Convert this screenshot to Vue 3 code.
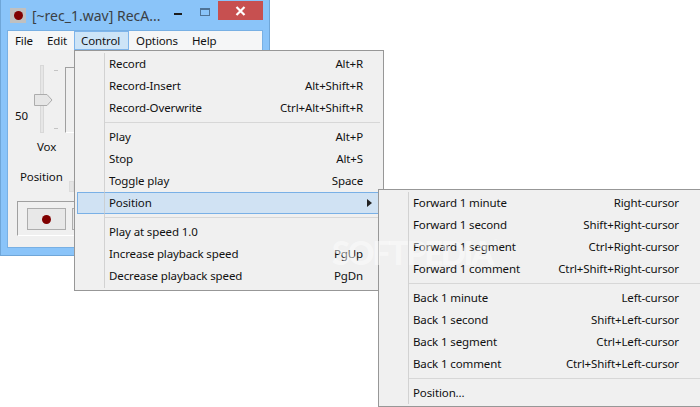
<script setup>
const menuBar = ['File', 'Edit', 'Control', 'Options', 'Help']
const control = [
  [['Record', 'Alt+R'], ['Record-Insert', 'Alt+Shift+R'], ['Record-Overwrite', 'Ctrl+Alt+Shift+R']],
  [['Play', 'Alt+P'], ['Stop', 'Alt+S'], ['Toggle play', 'Space'], ['Position', '', true]],
  [['Play at speed 1.0', ''], ['Increase playback speed', 'PgUp'], ['Decrease playback speed', 'PgDn']],
]
const position = [
  [['Forward 1 minute', 'Right-cursor'], ['Forward 1 second', 'Shift+Right-cursor'], ['Forward 1 segment', 'Ctrl+Right-cursor'], ['Forward 1 comment', 'Ctrl+Shift+Right-cursor']],
  [['Back 1 minute', 'Left-cursor'], ['Back 1 second', 'Shift+Left-cursor'], ['Back 1 segment', 'Ctrl+Left-cursor'], ['Back 1 comment', 'Ctrl+Shift+Left-cursor']],
  [['Position...', '']],
]
</script>

<template>
  <div class="desktop">
    <div class="window">
      <div class="titlebar">
        <div class="app-icon"><span class="dot"></span></div>
        <div class="title">[~rec_1.wav] RecA...</div>
        <div class="min"></div>
        <div class="max"></div>
        <div class="close">
          <svg width="11" height="10" viewBox="0 0 11 10"><path d="M1.5 1 L9.5 9 M9.5 1 L1.5 9" stroke="#fff" stroke-width="2.2" fill="none" /></svg>
        </div>
      </div>
      <div class="client">
        <div class="menubar">
          <div v-for="m in menuBar" :key="m" class="mb-item" :class="{ active: m === 'Control' }">{{ m }}</div>
        </div>
        <div class="body">
          <div class="mixer">
            <div class="value">50</div>
            <div class="slider">
              <div class="track"></div>
              <svg class="thumb" width="19" height="12" viewBox="0 0 19 12"><path d="M.5 .5 H13 L18 6 L13 11.5 H.5 Z" fill="#e6e6e6" stroke="#acacac" /></svg>
              <div class="ticks"><i></i><i></i></div>
            </div>
            <div class="group-left"></div>
            <div class="vox">Vox</div>
          </div>
          <div class="pos-row">
            <span class="pos-label">Position</span>
            <span class="pos-thumb"></span>
          </div>
          <div class="transport">
            <button class="tbtn"><span class="rec"></span></button>
            <button class="tbtn"></button>
          </div>
        </div>
      </div>
    </div>

    <div class="menu menu-control">
      <template v-for="(group, g) in control" :key="g">
        <div v-if="g" class="sep"></div>
        <div v-for="it in group" :key="it[0]" class="row" :class="{ hot: it[2] }">
          <span>{{ it[0] }}</span><span>{{ it[1] }}</span>
          <svg v-if="it[2]" class="arrow" width="5" height="8" viewBox="0 0 5 8"><path d="M0 0 L5 4 L0 8 Z" fill="#222" /></svg>
        </div>
      </template>
    </div>

    <div class="menu menu-position">
      <template v-for="(group, g) in position" :key="g">
        <div v-if="g" class="sep"></div>
        <div v-for="it in group" :key="it[0]" class="row">
          <span>{{ it[0] }}</span><span>{{ it[1] }}</span>
        </div>
      </template>
    </div>

    <div class="watermark">SOFTPEDIA<sup>®</sup></div>
  </div>
</template>

<style>
html, body { margin: 0; background: #fff; }
</style>

<style scoped>
.desktop {
  position: relative;
  width: 700px;
  height: 407px;
  overflow: hidden;
  background: #fff;
  font-family: "Noto Sans", "Open Sans", sans-serif;
  font-size: 11.5px;
  letter-spacing: -0.12px;
  color: #111;
}
.window {
  position: absolute;
  left: 0;
  top: 0;
  width: 270px;
  height: 256px;
  box-sizing: border-box;
  border: 1px solid #6fa6d8;
  border-top: 0;
  background: #8ac4f9;
  display: flex;
  flex-direction: column;
}
.titlebar {
  height: 31px;
  flex: none;
  display: flex;
  align-items: flex-start;
}
.app-icon {
  width: 16px;
  height: 15px;
  margin: 8px 0 0 9px;
  background: #c0c0c0;
  display: flex;
  align-items: center;
  justify-content: center;
}
.dot {
  width: 9px;
  height: 9px;
  border-radius: 50%;
  background: #800000;
}
.title {
  margin: 5px 0 0 6px;
  width: 142px;
  font-size: 14px;
  letter-spacing: 0;
  line-height: 22px;
  color: #3a3f45;
  white-space: nowrap;
}
.min {
  width: 8px;
  height: 2px;
  margin: 13px 0 0 0;
  background: #1c1c1c;
}
.max {
  width: 8px;
  height: 5px;
  margin: 8px 0 0 18px;
  border: 1px solid #4f7396;
  border-top-width: 2px;
}
.close {
  width: 45px;
  height: 19px;
  margin: 1px 0 0 8px;
  background: #c75050;
  display: flex;
  align-items: center;
  justify-content: center;
}
.client {
  margin: 0 7px;
  height: 216px;
  flex: none;
  box-shadow: 0 0 0 1px #78b0e4;
  background: #f0f0f0;
  display: flex;
  flex-direction: column;
}
.menubar {
  height: 19px;
  flex: none;
  box-sizing: border-box;
  background: #f5f6f7;
  display: flex;
}
.mb-item {
  box-sizing: border-box;
  height: 19px;
  padding: 0 7px;
  line-height: 20px;
}
.mb-item.active {
  background: #cde4f7;
  border: 1px solid #7eb4ea;
  line-height: 18px;
  padding: 0 6px;
  min-width: 55px;
}
.body {
  flex: 1;
  display: flex;
  flex-direction: column;
}
.mixer {
  height: 89px;
  margin-top: 15px;
  display: grid;
  grid-template-columns: 19px 31px 10px;
  grid-template-rows: 68px 21px;
  padding-left: 7px;
}
.value {
  align-self: end;
  line-height: 16px;
  margin-bottom: 9px;
  white-space: nowrap;
}
.slider {
  position: relative;
}
.track {
  position: absolute;
  left: 6px;
  top: 0;
  width: 2px;
  height: 66px;
  background: #e6e6e6;
  border: 1px solid #d8d8d8;
}
.thumb {
  position: absolute;
  left: 0;
  top: 29px;
}
.ticks {
  position: absolute;
  left: 20px;
  top: 5px;
  width: 4px;
  height: 59px;
  display: flex;
  flex-direction: column;
  justify-content: space-between;
}
.ticks i {
  display: block;
  height: 1px;
  background: #c4c4c4;
}
.group-left {
  margin-top: 2px;
  height: 64px;
  border-left: 1px solid #a0a0a0;
  border-top: 1px solid #a0a0a0;
  border-bottom: 1px solid #fff;
}
.vox {
  grid-column: 1 / 3;
  padding-left: 22px;
  line-height: 20px;
  padding-top: 4px;
}
.pos-row {
  height: 47px;
  flex: none;
  display: flex;
  align-items: flex-start;
  padding: 13px 0 0 12px;
  box-sizing: border-box;
  line-height: 16px;
}
.pos-label {
  width: 49px;
  margin-top: 2px;
}
.pos-thumb {
  width: 3px;
  height: 9px;
  margin-top: 14px;
  background: #e4e4e4;
  border: 1px solid #dcdcdc;
}
.transport {
  margin: 0 0 0 9px;
  width: 180px;
  height: 35px;
  flex: none;
  box-sizing: border-box;
  border: 1px solid #a0a0a0;
  border-right: 0;
  border-bottom: 1px solid #fff;
  padding: 6px 0 0 9px;
  display: flex;
  gap: 6px;
  align-items: flex-start;
}
.tbtn {
  width: 39px;
  height: 22px;
  padding: 0;
  box-sizing: border-box;
  border: 1px solid #adadad;
  background: #e8e8e8;
  display: flex;
  align-items: center;
  justify-content: center;
}
.rec {
  width: 9px;
  height: 9px;
  border-radius: 50%;
  background: #800000;
}
.menu {
  position: absolute;
  box-sizing: border-box;
  border: 1px solid #979797;
  background: #f0f0f0;
  padding: 2px;
}
.menu::before {
  content: "";
  position: absolute;
  left: 29px;
  top: 2px;
  bottom: 2px;
  width: 1px;
  background: rgba(200, 200, 200, 0.75);
  z-index: 1;
}
.menu-control {
  left: 74px;
  top: 50px;
  width: 310px;
  height: 241px;
}
.menu-position {
  left: 378px;
  top: 189px;
  width: 326px;
  height: 218px;
}
.row {
  position: relative;
  box-sizing: border-box;
  height: 22px;
  line-height: 22px;
  padding: 0 18px 0 32px;
  display: flex;
  justify-content: space-between;
  white-space: nowrap;
}
.menu-position .row {
  padding-right: 22px;
}
.row.hot {
  background: #d0e2f3;
  box-shadow: inset 0 0 0 1px #79b0e6;
}
.arrow {
  position: absolute;
  right: 9px;
  top: 7px;
}
.sep {
  height: 1px;
  margin: 3px 1px 3px 28px;
  background: #d7d7d7;
}
.watermark {
  position: absolute;
  left: 332px;
  top: 232px;
  font-family: "Lato", sans-serif;
  font-weight: 900;
  font-size: 33px;
  letter-spacing: -2.4px;
  line-height: 40px;
  color: rgba(255, 255, 255, 0.45);
  white-space: nowrap;
}
.watermark sup {
  font-size: 9px;
  font-weight: 400;
  letter-spacing: 0;
  vertical-align: 18px;
  line-height: 0;
}
</style>
